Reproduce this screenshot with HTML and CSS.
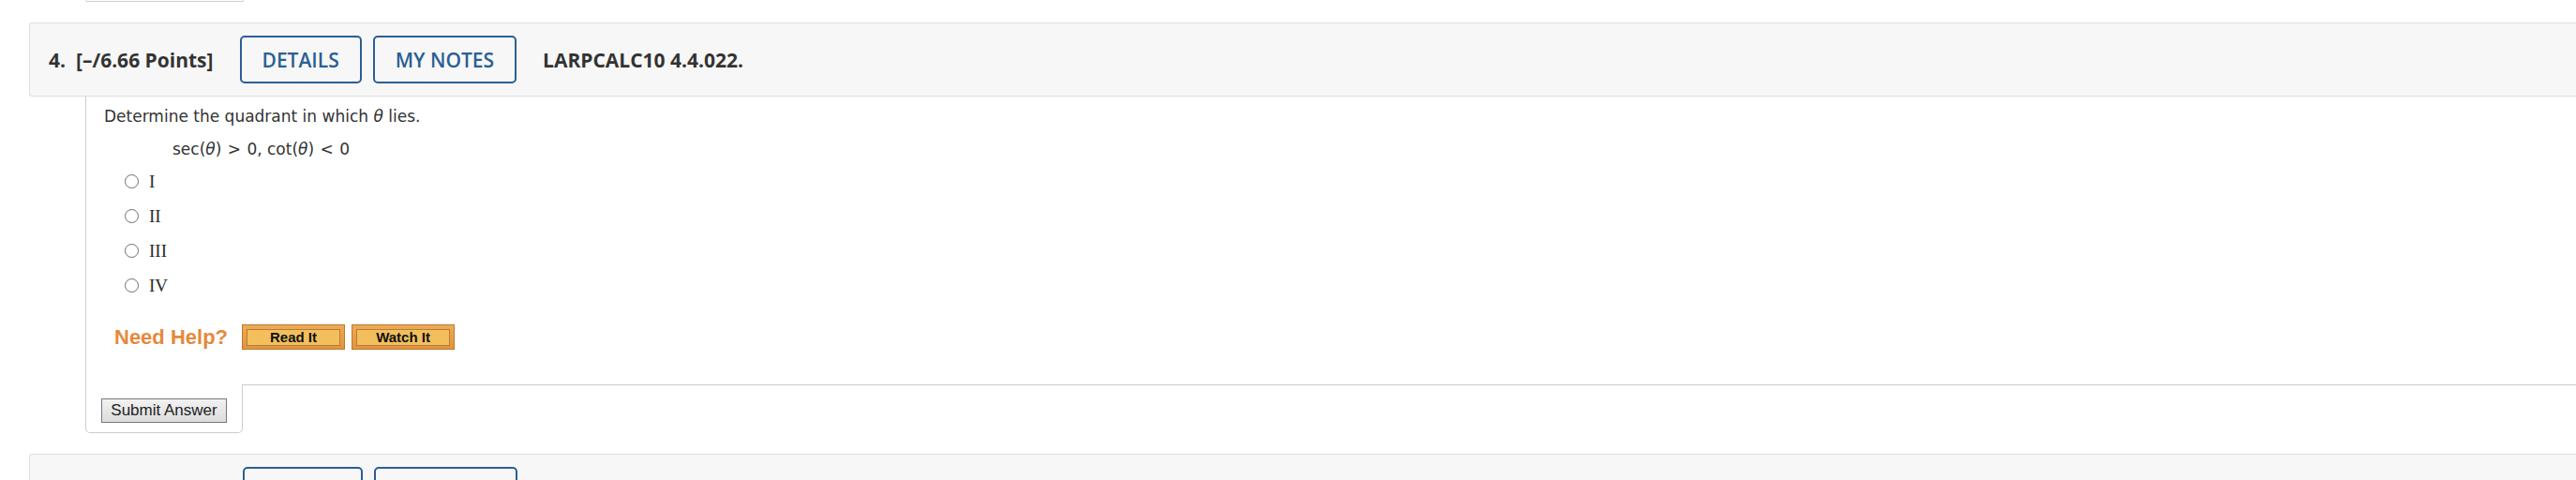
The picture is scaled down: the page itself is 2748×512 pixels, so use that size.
FILE: index.html
```html
<!DOCTYPE html>
<html lang="en">
<head>
<meta charset="utf-8">
<title>Question 4</title>
<link rel="stylesheet" href="styles.css">
</head>
<body>
  <div class="prev-footer">
    <div class="prev-tab"></div>
  </div>

  <section class="question">
    <div class="q-header">
      <span class="q-num">4.</span>
      <span class="q-points">[–/6.66 Points]</span>
      <div class="hdr-actions">
        <button class="hdr-btn" type="button">DETAILS</button>
        <button class="hdr-btn" type="button">MY NOTES</button>
      </div>
      <span class="q-code">LARPCALC10 4.4.022.</span>
    </div>
    <div class="q-body">
      <div class="q-content">
        <p class="prompt">Determine the quadrant in which <i class="var">θ</i> lies.</p>
        <p class="math">sec(<i class="var">θ</i>) <span class="op">&gt;</span> 0, cot(<i class="var">θ</i>) <span class="op">&lt;</span> 0</p>
        <ul class="choices">
          <li class="choice"><span class="radio"></span><span class="numeral">I</span></li>
          <li class="choice"><span class="radio"></span><span class="numeral">II</span></li>
          <li class="choice"><span class="radio"></span><span class="numeral">III</span></li>
          <li class="choice"><span class="radio"></span><span class="numeral">IV</span></li>
        </ul>
        <div class="help">
          <span class="help-label">Need Help?</span>
          <span class="help-btn"><span class="help-btn-inner">Read It</span></span>
          <span class="help-btn"><span class="help-btn-inner">Watch It</span></span>
        </div>
      </div>
      <div class="q-footer">
        <div class="submit-tab">
          <button class="submit" type="button">Submit Answer</button>
        </div>
        <div class="footer-fill"></div>
      </div>
    </div>
  </section>

  <section class="question">
    <div class="q-header q-header-next">
      <div class="hdr-actions hdr-actions-next">
        <button class="hdr-btn hdr-btn-details" type="button" aria-label="Details"></button>
        <button class="hdr-btn hdr-btn-notes" type="button" aria-label="My notes"></button>
      </div>
    </div>
  </section>
</body>
</html>
```

FILE: styles.css
```css
html, body {
  margin: 0;
  padding: 0;
  background: #ffffff;
  overflow: hidden;
}

body {
  font-family: "DejaVu Sans", Verdana, sans-serif;
  color: #333333;
}

/* bottom edge of the previous question's submit tab */
.prev-footer {
  display: flex;
  padding-left: 91px;
}

.prev-tab {
  width: 167px;
  height: 1px;
  border: 1px solid #cccccc;
  border-top: none;
  border-radius: 0 0 4px 4px;
}

.question {
  margin: 22px 0 0 31px;
}

.q-header {
  display: flex;
  align-items: center;
  height: 77px;
  padding-left: 20px;
  background: #f7f7f7;
  border: 1px solid #dedede;
  border-right: none;
  border-radius: 3px 0 0 3px;
  font-family: "Open Sans", sans-serif;
  font-weight: 700;
  font-size: 21px;
  color: #333333;
}

.q-num {
  margin-right: 11px;
}

.hdr-actions {
  display: flex;
  gap: 12px;
  margin: 0 28px 0 28px;
}

.hdr-actions-next {
  margin-left: 207px;
}

.hdr-btn {
  height: 51px;
  padding: 0 22px;
  background: transparent;
  border: 2px solid #2a5f94;
  border-radius: 5px;
  font-family: "Open Sans", sans-serif;
  font-weight: 600;
  font-size: 21px;
  color: #2a5f94;
}

.hdr-btn-details {
  width: 128px;
}

.hdr-btn-notes {
  width: 153px;
}

.q-body {
  margin-left: 60px;
}

.q-content {
  border-left: 1px solid #cccccc;
  padding: 11px 0 37px 19px;
}

.prompt,
.math {
  margin: 0;
  font-size: 17px;
  line-height: 20px;
}

.math {
  margin-top: 15px;
  padding-left: 73px;
}

.var {
  font-style: italic;
}

.op {
  padding: 0 1px;
}

.choices {
  list-style: none;
  margin: 6px 0 0 0;
  padding: 0 0 0 22px;
}

.choice {
  display: flex;
  align-items: center;
  height: 37px;
}

.radio {
  box-sizing: border-box;
  width: 15px;
  height: 15px;
  border: 1.5px solid #6e6e6e;
  border-radius: 50%;
  background: #ffffff;
  margin-right: 11px;
}

.numeral {
  font-family: "Liberation Serif", "Times New Roman", serif;
  font-size: 19px;
  color: #2b2b2b;
}

.help {
  display: flex;
  align-items: center;
  margin: 23px 0 0 11px;
}

.help-label {
  font-family: "Liberation Sans", Arial, sans-serif;
  font-weight: 700;
  font-size: 22px;
  color: #e5893b;
  margin-right: 15px;
}

.help-btn {
  display: block;
  width: 100px;
  padding: 4px 4px 3px 4px;
  border: 1px solid #b97a35;
  background: linear-gradient(#eeaa55, #e3943c);
  margin-right: 7px;
}

.help-btn-inner {
  display: block;
  height: 16px;
  border: 1px solid #b57b3b;
  background: #f3bf5c;
  font-family: "Liberation Sans", Arial, sans-serif;
  font-weight: 700;
  font-size: 15px;
  line-height: 16px;
  text-align: center;
  color: #111111;
}

.q-footer {
  display: flex;
}

.submit-tab {
  width: 168px;
  border: 1px solid #cccccc;
  border-top: none;
  border-radius: 0 0 5px 5px;
  padding: 15px 0 10px 16px;
  box-sizing: border-box;
}

.submit {
  display: block;
  width: 134px;
  height: 26px;
  padding: 0;
  border: 1px solid #777777;
  background: linear-gradient(#f2f2f2, #dcdcdc);
  font-family: "Liberation Sans", Arial, sans-serif;
  font-size: 17px;
  color: #222222;
}

.footer-fill {
  flex: 1;
  border-top: 1px solid #cccccc;
}
```
